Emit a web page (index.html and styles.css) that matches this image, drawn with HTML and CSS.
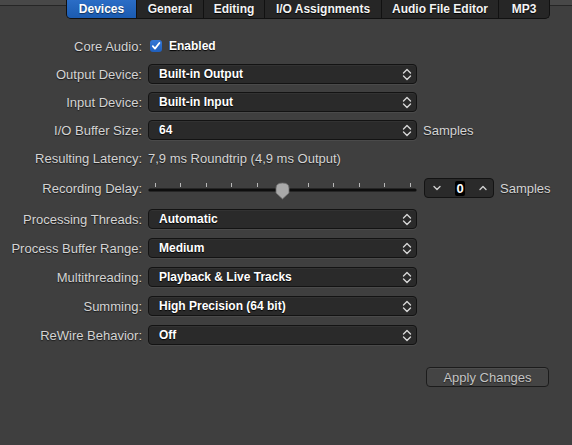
FILE: index.html
```html
<!DOCTYPE html>
<html>
<head>
<meta charset="utf-8">
<link rel="stylesheet" href="styles.css">
</head>
<body>
<div class="header">
  <div class="tabs">
    <div class="tab tab-devices active">Devices</div>
    <div class="tab tab-general">General</div>
    <div class="tab tab-editing">Editing</div>
    <div class="tab tab-io">I/O Assignments</div>
    <div class="tab tab-afe">Audio File Editor</div>
    <div class="tab tab-mp3">MP3</div>
  </div>
</div>

<div class="form">
  <div class="row r-core">
    <div class="label">Core Audio:</div>
    <div class="ctrl">
      <span class="checkbox"><svg width="12" height="12" viewBox="0 0 12 12"><path d="M2.8 6.2 L5 8.6 L9.4 3" fill="none" stroke="#fff" stroke-width="1.8" stroke-linecap="round" stroke-linejoin="round"/></svg></span>
      <span class="value">Enabled</span>
    </div>
  </div>

  <div class="row">
    <div class="label">Output Device:</div>
    <div class="ctrl"><div class="popup"><span>Built-in Output</span><svg class="chev" width="10" height="13" viewBox="0 0 10 13"><path d="M1.5 5 L5 1.5 L8.5 5 M1.5 8 L5 11.5 L8.5 8" fill="none" stroke="#d6d6d6" stroke-width="1.4" stroke-linecap="round" stroke-linejoin="round"/></svg></div></div>
  </div>

  <div class="row">
    <div class="label">Input Device:</div>
    <div class="ctrl"><div class="popup"><span>Built-in Input</span><svg class="chev" width="10" height="13" viewBox="0 0 10 13"><path d="M1.5 5 L5 1.5 L8.5 5 M1.5 8 L5 11.5 L8.5 8" fill="none" stroke="#d6d6d6" stroke-width="1.4" stroke-linecap="round" stroke-linejoin="round"/></svg></div></div>
  </div>

  <div class="row">
    <div class="label">I/O Buffer Size:</div>
    <div class="ctrl"><div class="popup"><span>64</span><svg class="chev" width="10" height="13" viewBox="0 0 10 13"><path d="M1.5 5 L5 1.5 L8.5 5 M1.5 8 L5 11.5 L8.5 8" fill="none" stroke="#d6d6d6" stroke-width="1.4" stroke-linecap="round" stroke-linejoin="round"/></svg></div><span class="unit">Samples</span></div>
  </div>

  <div class="row">
    <div class="label">Resulting Latency:</div>
    <div class="ctrl"><span class="plain">7,9 ms Roundtrip (4,9 ms Output)</span></div>
  </div>

  <div class="row r-delay">
    <div class="label">Recording Delay:</div>
    <div class="ctrl">
      <svg class="slider" width="269" height="24" viewBox="0 0 269 24">
        <g stroke="#b8b8b8" stroke-width="1">
          <line x1="7.5" y1="6" x2="7.5" y2="10"/>
          <line x1="32.5" y1="6" x2="32.5" y2="10"/>
          <line x1="58.5" y1="6" x2="58.5" y2="10"/>
          <line x1="83.5" y1="6" x2="83.5" y2="10"/>
          <line x1="109.5" y1="6" x2="109.5" y2="10"/>
          <line x1="160.5" y1="6" x2="160.5" y2="10"/>
          <line x1="185.5" y1="6" x2="185.5" y2="10"/>
          <line x1="211.5" y1="6" x2="211.5" y2="10"/>
          <line x1="236.5" y1="6" x2="236.5" y2="10"/>
          <line x1="262.5" y1="6" x2="262.5" y2="10"/>
        </g>
        <line x1="2" y1="13" x2="267" y2="13" stroke="#0e0e0e" stroke-width="3.2" stroke-linecap="round"/>
        <path d="M128 11 Q128 6 134.5 6 Q141 6 141 11 V16 L134.5 22 L128 16 Z" fill="#a9a9a9" stroke="#6a6a6a" stroke-width="0.8"/>
      </svg>
      <div class="stepper">
        <svg width="8" height="6" viewBox="0 0 8 6"><path d="M1 1.5 L4 4.5 L7 1.5" fill="none" stroke="#cfcfcf" stroke-width="1.4" stroke-linecap="round" stroke-linejoin="round"/></svg>
        <span class="step-val">0</span>
        <svg width="8" height="6" viewBox="0 0 8 6"><path d="M1 4.5 L4 1.5 L7 4.5" fill="none" stroke="#cfcfcf" stroke-width="1.4" stroke-linecap="round" stroke-linejoin="round"/></svg>
      </div>
      <span class="unit">Samples</span>
    </div>
  </div>

  <div class="row r-gap9">
    <div class="label">Processing Threads:</div>
    <div class="ctrl"><div class="popup"><span>Automatic</span><svg class="chev" width="10" height="13" viewBox="0 0 10 13"><path d="M1.5 5 L5 1.5 L8.5 5 M1.5 8 L5 11.5 L8.5 8" fill="none" stroke="#d6d6d6" stroke-width="1.4" stroke-linecap="round" stroke-linejoin="round"/></svg></div></div>
  </div>

  <div class="row r-gap9">
    <div class="label">Process Buffer Range:</div>
    <div class="ctrl"><div class="popup"><span>Medium</span><svg class="chev" width="10" height="13" viewBox="0 0 10 13"><path d="M1.5 5 L5 1.5 L8.5 5 M1.5 8 L5 11.5 L8.5 8" fill="none" stroke="#d6d6d6" stroke-width="1.4" stroke-linecap="round" stroke-linejoin="round"/></svg></div></div>
  </div>

  <div class="row r-gap9">
    <div class="label">Multithreading:</div>
    <div class="ctrl"><div class="popup"><span>Playback &amp; Live Tracks</span><svg class="chev" width="10" height="13" viewBox="0 0 10 13"><path d="M1.5 5 L5 1.5 L8.5 5 M1.5 8 L5 11.5 L8.5 8" fill="none" stroke="#d6d6d6" stroke-width="1.4" stroke-linecap="round" stroke-linejoin="round"/></svg></div></div>
  </div>

  <div class="row r-gap9">
    <div class="label">Summing:</div>
    <div class="ctrl"><div class="popup"><span>High Precision (64 bit)</span><svg class="chev" width="10" height="13" viewBox="0 0 10 13"><path d="M1.5 5 L5 1.5 L8.5 5 M1.5 8 L5 11.5 L8.5 8" fill="none" stroke="#d6d6d6" stroke-width="1.4" stroke-linecap="round" stroke-linejoin="round"/></svg></div></div>
  </div>

  <div class="row r-gap9">
    <div class="label">ReWire Behavior:</div>
    <div class="ctrl"><div class="popup"><span>Off</span><svg class="chev" width="10" height="13" viewBox="0 0 10 13"><path d="M1.5 5 L5 1.5 L8.5 5 M1.5 8 L5 11.5 L8.5 8" fill="none" stroke="#d6d6d6" stroke-width="1.4" stroke-linecap="round" stroke-linejoin="round"/></svg></div></div>
  </div>

  <div class="actions">
    <div class="button">Apply Changes</div>
  </div>
</div>
</body>
</html>
```

FILE: styles.css
```css
html, body {
  margin: 0;
  padding: 0;
}
body {
  width: 572px;
  height: 445px;
  overflow: hidden;
  background: #3f3f3f;
  font-family: "Liberation Sans", Arial, sans-serif;
  color: #d6d6d6;
  font-size: 13px;
}
.header {
  height: 20px;
  background: linear-gradient(to bottom, #484848 0, #484848 5px, #262626 5px, #262626 6px, #3f3f3f 6px);
}
.tabs {
  display: flex;
  margin-left: 66px;
  width: 484px;
  height: 19px;
  background: #262626;
  border: 1px solid #111;
  border-top: none;
  border-radius: 0 0 5px 5px;
  box-sizing: border-box;
  overflow: hidden;
}
.tab {
  display: flex;
  align-items: center;
  justify-content: center;
  font-weight: bold;
  font-size: 12px;
  color: #f4f4f4;
  text-shadow: 0 1px 1px #000;
  border-right: 1px solid #111;
  box-sizing: border-box;
  height: 100%;
}
.tab-devices { width: 70px; }
.tab-general { width: 67px; }
.tab-editing { width: 61px; }
.tab-io { width: 117px; }
.tab-afe { width: 117px; }
.tab-mp3 { flex: 1; border-right: none; }
.tab.active {
  background: linear-gradient(to bottom, #2b6dc6, #1b5bb0);
  color: #fff;
  text-shadow: 0 1px 1px rgba(0,0,0,0.5);
}

.form {
  display: flex;
  flex-direction: column;
  padding-top: 16px;
}
.row {
  display: flex;
  align-items: center;
  height: 20px;
  margin-bottom: 8px;
}
.r-delay {
  height: 24px;
  margin-bottom: 9px;
}
.r-gap9 {
  margin-bottom: 9px;
}
.label {
  width: 143px;
  flex: none;
  text-align: right;
  padding-right: 1px;
  box-sizing: border-box;
  color: #d4d4d4;
  text-shadow: 0 1px 1px rgba(0,0,0,0.6);
  white-space: nowrap;
}
.ctrl {
  display: flex;
  align-items: center;
  height: 100%;
  margin-left: 5px;
}
.checkbox {
  width: 12px;
  height: 12px;
  border-radius: 3px;
  background: linear-gradient(to bottom, #3478d6, #1f5fbd);
  display: flex;
  align-items: center;
  justify-content: center;
  margin-left: 2px;
  margin-right: 7px;
}
.checkbox svg { display: block; }
.value {
  font-weight: bold;
  font-size: 12px;
  color: #fff;
  text-shadow: 0 1px 1px #000;
}
.plain {
  color: #d4d4d4;
  text-shadow: 0 1px 1px rgba(0,0,0,0.6);
}
.popup {
  width: 269px;
  height: 20px;
  box-sizing: border-box;
  background: #2a2a2a;
  border: 1px solid #131313;
  border-radius: 4px;
  box-shadow: inset 0 1px 0 rgba(255,255,255,0.04), 0 1px 0 rgba(255,255,255,0.06);
  display: flex;
  align-items: center;
  justify-content: space-between;
  padding: 0 4px 0 10px;
  font-weight: bold;
  font-size: 12px;
  color: #fff;
  text-shadow: 0 1px 1px #000;
}
.chev { display: block; }
.unit {
  margin-left: 6px;
  color: #d4d4d4;
  text-shadow: 0 1px 1px rgba(0,0,0,0.6);
}
.slider {
  display: block;
  width: 269px;
  height: 24px;
  margin-top: 2px;
}
.stepper {
  margin-left: 7px;
  width: 70px;
  height: 20px;
  box-sizing: border-box;
  background: #2a2a2a;
  border: 1px solid #131313;
  border-radius: 4px;
  display: flex;
  align-items: center;
  justify-content: space-between;
  padding: 0 6px 0 8px;
}
.stepper svg { display: block; }
.step-val {
  font-weight: bold;
  font-size: 13px;
  color: #fff;
  background: #000;
  padding: 0 1px;
  border-radius: 2px;
  line-height: 15px;
}
.actions {
  display: flex;
  justify-content: flex-end;
  padding-right: 23px;
  margin-top: 13px;
}
.button {
  width: 123px;
  height: 20px;
  box-sizing: border-box;
  border: 1px solid #1c1c1c;
  border-radius: 4px;
  background: #444;
  box-shadow: inset 0 1px 0 rgba(255,255,255,0.05);
  display: flex;
  align-items: center;
  justify-content: center;
  color: #c4c4c4;
  font-size: 13px;
  text-shadow: 0 1px 1px rgba(0,0,0,0.5);
}
```
